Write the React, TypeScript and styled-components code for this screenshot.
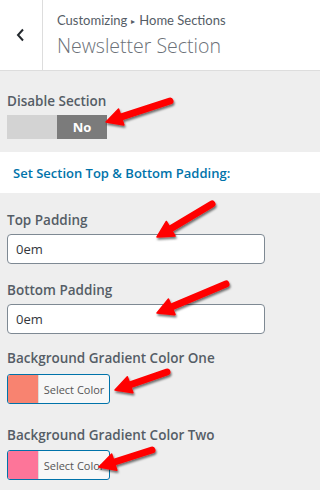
import React from 'react';
import styled, { createGlobalStyle } from 'styled-components';

const GlobalStyle = createGlobalStyle`
  html, body {
    margin: 0;
    padding: 0;
    background: #eeeeee;
  }
  body {
    font-family: 'Open Sans', 'Noto Sans', sans-serif;
  }
`;

const Page = styled.div`
  position: relative;
  width: 100%;
  min-width: 275px;
  height: 490px;
  overflow: hidden;
  background: #eeeeee;
`;

const Header = styled.header`
  display: flex;
  height: 70px;
  background: #ffffff;
  border-bottom: 1px solid #dddddd;
`;

const BackButton = styled.div`
  width: 42px;
  display: flex;
  align-items: center;
  justify-content: center;
  border-right: 1px solid #dddddd;
  color: #23282d;
`;

const Titles = styled.div`
  display: flex;
  flex-direction: column;
  padding: 11px 0 0 14px;
  color: #555d66;
`;

const Breadcrumb = styled.span`
  font-family: Lato, 'Open Sans', sans-serif;
  font-size: 13px;
  line-height: 18px;
`;

const Crumb = styled.span`
  display: inline-block;
  margin: 0 4px;
  font-size: 8px;
  vertical-align: 1px;
`;

const Title = styled.h1`
  margin: 2px 0 0;
  font-size: 19.5px;
  font-weight: 300;
  line-height: 28px;
  color: #6b7178;
`;

const Section = styled.section`
  padding: 0 7px;
`;

const Field = styled.div<{ $top: number }>`
  display: flex;
  flex-direction: column;
  align-items: flex-start;
  padding-top: ${({ $top }) => $top}px;
`;

const Label = styled.label<{ $gap?: number }>`
  font-size: 13.5px;
  font-weight: 600;
  line-height: 20px;
  color: #555d66;
  margin-bottom: ${({ $gap }) => $gap ?? 4}px;
`;

const Toggle = styled.div`
  display: flex;
  width: 100px;
  height: 24px;
`;

const ToggleHalf = styled.div<{ $on?: boolean }>`
  flex: 1;
  display: flex;
  align-items: center;
  justify-content: center;
  background: ${({ $on }) => ($on ? '#7b7b7b' : '#d3d3d3')};
  color: #ffffff;
  font-size: 13px;
  font-weight: 700;
`;

const Band = styled.div`
  margin-top: 13px;
  height: 41px;
  background: #ffffff;
  display: flex;
  align-items: center;
  padding-left: 13px;
  color: #0073aa;
  font-size: 13px;
  font-weight: 600;
`;

const TextInput = styled.input`
  box-sizing: border-box;
  width: 258px;
  height: 30px;
  padding: 0 8px;
  border: 1px solid #7e8993;
  border-radius: 4px;
  background: #ffffff;
  font-family: inherit;
  font-size: 13px;
  color: #32373c;
  outline: none;
`;

const ColorButton = styled.button`
  box-sizing: border-box;
  display: flex;
  align-items: stretch;
  width: 103px;
  height: 30px;
  padding: 0;
  border: 1px solid #0073aa;
  border-radius: 3px;
  background: #f7f7f7;
  overflow: hidden;
  font-family: inherit;
`;

const Swatch = styled.span<{ $color: string }>`
  width: 30px;
  background: ${({ $color }) => $color};
  border-right: 1px solid #dddddd;
`;

const SwatchText = styled.span`
  flex: 1;
  display: flex;
  align-items: center;
  justify-content: center;
  font-size: 11px;
  color: #555555;
`;

const Overlay = styled.svg`
  position: absolute;
  left: 0;
  top: 0;
  pointer-events: none;
`;

type ArrowSpec = { x1: number; y1: number; x2: number; y2: number };

const arrows: ArrowSpec[] = [
  { x1: 170, y1: 101, x2: 106, y2: 122 },
  { x1: 212, y1: 204, x2: 157, y2: 237 },
  { x1: 226, y1: 284, x2: 157, y2: 313 },
  { x1: 167, y1: 372, x2: 115, y2: 390 },
  { x1: 152, y1: 450, x2: 99, y2: 467 },
];

const Arrow = ({ x1, y1, x2, y2 }: ArrowSpec) => {
  const dx = x2 - x1;
  const dy = y2 - y1;
  const len = Math.hypot(dx, dy);
  const ux = dx / len;
  const uy = dy / len;
  const nx = -uy;
  const ny = ux;
  const bx = x2 - ux * 16;
  const by = y2 - uy * 16;
  const head = `${x2},${y2} ${bx + nx * 8.5},${by + ny * 8.5} ${bx - nx * 8.5},${by - ny * 8.5}`;
  return (
    <g filter="url(#shadow)">
      <line x1={x1} y1={y1} x2={bx + ux * 3} y2={by + uy * 3} stroke="#f00" strokeWidth={7} strokeLinecap="round" />
      <polygon points={head} fill="#f00" stroke="#f00" strokeWidth={1.5} strokeLinejoin="round" />
    </g>
  );
};

const App = () => (
  <Page>
    <GlobalStyle />
    <Header>
      <BackButton>
        <svg width="10" height="14" viewBox="0 0 10 14">
          <polyline points="7,1.5 2,7 7,12.5" fill="none" stroke="#23282d" strokeWidth="2" />
        </svg>
      </BackButton>
      <Titles>
        <Breadcrumb>
          Customizing<Crumb>▸</Crumb>Home Sections
        </Breadcrumb>
        <Title>Newsletter Section</Title>
      </Titles>
    </Header>

    <Section>
      <Field $top={20}>
        <Label $gap={4}>Disable Section</Label>
        <Toggle>
          <ToggleHalf />
          <ToggleHalf $on>No</ToggleHalf>
        </Toggle>
      </Field>
    </Section>

    <Band>Set Section Top &amp; Bottom Padding:</Band>

    <Section>
      <Field $top={17}>
        <Label>Top Padding</Label>
        <TextInput defaultValue="0em" />
      </Field>
      <Field $top={16}>
        <Label>Bottom Padding</Label>
        <TextInput defaultValue="0em" />
      </Field>
      <Field $top={14}>
        <Label $gap={6}>Background Gradient Color One</Label>
        <ColorButton>
          <Swatch $color="#f88370" />
          <SwatchText>Select Color</SwatchText>
        </ColorButton>
      </Field>
      <Field $top={21}>
        <Label $gap={5}>Background Gradient Color Two</Label>
        <ColorButton>
          <Swatch $color="#fd7599" />
          <SwatchText>Select Color</SwatchText>
        </ColorButton>
      </Field>
    </Section>

    <Overlay width="275" height="490">
      <defs>
        <filter id="shadow" x="-20%" y="-50%" width="140%" height="200%">
          <feDropShadow dx="1" dy="2" stdDeviation="1.2" floodColor="#000" floodOpacity="0.55" />
        </filter>
      </defs>
      {arrows.map((a, i) => (
        <Arrow key={i} {...a} />
      ))}
    </Overlay>
  </Page>
);

export default App;
